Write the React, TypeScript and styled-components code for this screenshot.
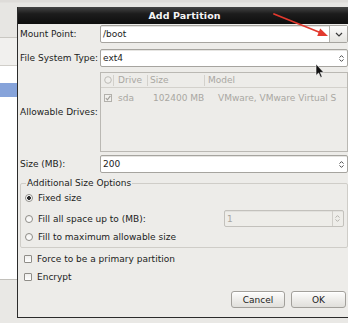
import styled, { createGlobalStyle } from "styled-components"

const GlobalStyle = createGlobalStyle`
  html, body {
    margin: 0;
    padding: 0;
  }
  body {
    width: 348px;
    height: 323px;
    overflow: hidden;
    background: #e9e8e5;
    font-family: "DejaVu Sans", "Liberation Sans", sans-serif;
    font-size: 9px;
    color: #1c1c1c;
  }
`

const Desktop = styled.div`
  position: relative;
  width: 348px;
  height: 323px;
  overflow: hidden;
`

// installer window sitting behind the dialog
const BackWindow = styled.div`
  display: flex;
  flex-direction: column;
  height: 100%;
`

const BackToolbar = styled.div`
  height: 37px;
  background: linear-gradient(#dedcd9 0, #dedcd9 2px, #e7e6e3 3px);
  border-bottom: 1px solid #c9c7c2;
`

const BackBand = styled.div`
  height: 27px;
  background: #f1f0ee;
  border-bottom: 1px solid #d0cec9;
`

const BackList = styled.div`
  height: 214px;
  box-sizing: border-box;
  padding-top: 17px;
  background: #fff;
  border-bottom: 1px solid #c2c0bb;
`

const BackSelected = styled.div`
  height: 14px;
  background: #86a3da;
`

const Dialog = styled.div`
  position: absolute;
  left: 17px;
  top: 7px;
  width: 335px;
  height: 311px;
  box-sizing: border-box;
  border: 1px solid #2b2b2b;
  border-top: none;
  background: #edece9;
  display: flex;
  flex-direction: column;
`

const TitleBar = styled.div`
  height: 17px;
  flex: none;
  display: flex;
  align-items: center;
  justify-content: center;
  background: linear-gradient(#454545, #1c1c1c 40%, #0e0e0e);
  color: #f4f4f4;
  font-weight: bold;
  font-size: 9.5px;
  letter-spacing: 0.1px;
`

const Content = styled.div`
  display: flex;
  flex-direction: column;
  padding: 0 3px 0 2px;
`

const Row = styled.div<{ $mt: number; $h: number }>`
  display: grid;
  grid-template-columns: 80px 1fr;
  align-items: center;
  margin-top: ${(p) => p.$mt}px;
  height: ${(p) => p.$h}px;
`

const Label = styled.span`
  white-space: nowrap;
`

const Field = styled.div<{ $disabled?: boolean }>`
  display: flex;
  align-items: stretch;
  height: 100%;
  box-sizing: border-box;
  border: 1px solid ${(p) => (p.$disabled ? "#c3c1bc" : "#a6a49f")};
  border-radius: 2px;
  background: ${(p) => (p.$disabled ? "#eeede9" : "#fff")};
  box-shadow: inset 0 1px 0 ${(p) => (p.$disabled ? "#e2e1dd" : "#e6e5e2")};
  color: ${(p) => (p.$disabled ? "#a8a6a1" : "#1c1c1c")};
`

const FieldText = styled.span`
  flex: 1;
  display: flex;
  align-items: center;
  padding-left: 2px;
`

const DropButton = styled.div`
  width: 17px;
  display: flex;
  align-items: center;
  justify-content: center;
  border-left: 1px solid #b3b1ac;
  background: linear-gradient(#fbfbfa, #e5e4e0);
`

const Arrows = styled.div<{ $boxed?: boolean }>`
  width: 9px;
  display: flex;
  flex-direction: column;
  align-items: center;
  justify-content: center;
  gap: 1px;
  border-left: ${(p) => (p.$boxed ? "1px solid #cfcdc8" : "none")};
  margin-right: 1px;
`

const DriveTable = styled.div`
  height: 100%;
  box-sizing: border-box;
  border: 1px solid #bab8b3;
  background: #edece9;
  color: #a9a7a2;
  display: flex;
  flex-direction: column;
`

const DriveRow = styled.div<{ $head?: boolean }>`
  display: grid;
  grid-template-columns: 12px 34px 57px 1fr;
  align-items: center;
  height: 14px;
  margin-top: ${(p) => (p.$head ? 0 : 3)}px;
  border-bottom: ${(p) => (p.$head ? "1px solid #d3d1cc" : "none")};
`

const Cell = styled.span<{ $sep?: boolean; $pl: number }>`
  white-space: nowrap;
  overflow: hidden;
  padding-left: ${(p) => p.$pl}px;
  border-left: ${(p) => (p.$sep ? "1px solid #d3d1cc" : "none")};
  line-height: 11px;
  display: flex;
  align-items: center;
`

const Frame = styled.fieldset`
  margin: 4px 0 0 0;
  padding: 2px 2px 3px 4px;
  border: 1px solid #cfcdc8;
  border-radius: 2px;
  display: flex;
  flex-direction: column;
  min-width: 0;
`

const Legend = styled.legend`
  padding: 0 1px;
  margin-left: 1px;
  line-height: 12px;
`

const OptionRow = styled.div<{ $h: number; $mt: number }>`
  display: flex;
  align-items: center;
  gap: 5px;
  height: ${(p) => p.$h}px;
  margin-top: ${(p) => p.$mt}px;
`

const Radio = styled.span<{ $on?: boolean }>`
  width: 8px;
  height: 8px;
  box-sizing: border-box;
  border-radius: 50%;
  border: 1px solid #8f8d88;
  background: ${(p) =>
    p.$on
      ? "radial-gradient(circle, #2e2e2e 0 1.6px, #fff 2.2px)"
      : "linear-gradient(#f2f1ef, #fff)"};
  flex: none;
`

const CheckBox = styled.span`
  width: 8px;
  height: 8px;
  box-sizing: border-box;
  border: 1px solid #8f8d88;
  border-radius: 1px;
  background: linear-gradient(#efeeec, #fff);
  flex: none;
`

const SpinDisabled = styled(Field)`
  margin-left: auto;
  margin-right: 1px;
  width: 120px;
  height: 17px;
`

const CheckRow = styled.div<{ $mt: number }>`
  display: flex;
  align-items: center;
  gap: 5px;
  height: 12px;
  padding-left: 4px;
  margin-top: ${(p) => p.$mt}px;
`

const ButtonBar = styled.div`
  display: flex;
  justify-content: flex-end;
  gap: 6px;
  margin-top: 8px;
  margin-right: 2px;
`

const Button = styled.button<{ $w: number }>`
  width: ${(p) => p.$w}px;
  height: 17px;
  padding: 0;
  font: inherit;
  color: #1c1c1c;
  border: 1px solid #a2a09b;
  border-radius: 3px;
  background: linear-gradient(#fdfdfc, #ebeae7 60%, #e0dfdb);
  box-shadow: inset 0 1px 0 #fff;
`

const Overlay = styled.svg`
  position: absolute;
  left: 0;
  top: 0;
  pointer-events: none;
`

const ChevronDown = () => (
  <svg width="8" height="5" viewBox="0 0 8 5">
    <path d="M1 1l3 3 3-3" fill="none" stroke="#3a3a3a" strokeWidth="1.2" />
  </svg>
)

const UpDown = ({ color = "#4a4a4a" }: { color?: string }) => (
  <>
    <svg width="5" height="3" viewBox="0 0 5 3">
      <path d="M0.5 2.6L2.5 0.6l2 2" fill="none" stroke={color} strokeWidth="1" />
    </svg>
    <svg width="5" height="3" viewBox="0 0 5 3">
      <path d="M0.5 0.4l2 2 2-2" fill="none" stroke={color} strokeWidth="1" />
    </svg>
  </>
)

const TickBox = () => (
  <svg width="8" height="8" viewBox="0 0 8 8">
    <rect x="0.5" y="0.5" width="7" height="7" fill="#f0efec" stroke="#b2b0ab" />
    <path d="M1.8 4l1.6 1.8 3-4" fill="none" stroke="#a09e99" strokeWidth="1.1" />
  </svg>
)

const HeadToggle = () => (
  <svg width="8" height="8" viewBox="0 0 8 8">
    <circle cx="4" cy="4" r="3.3" fill="#f0efec" stroke="#bcbab5" />
  </svg>
)

export default function App() {
  return (
    <>
      <GlobalStyle />
      <Desktop>
        <BackWindow>
          <BackToolbar />
          <BackBand />
          <BackList>
            <BackSelected />
          </BackList>
        </BackWindow>

        <Dialog>
          <TitleBar>Add Partition</TitleBar>
          <Content>
            <Row $mt={1} $h={18}>
              <Label>Mount Point:</Label>
              <Field>
                <FieldText>/boot</FieldText>
                <DropButton>
                  <ChevronDown />
                </DropButton>
              </Field>
            </Row>

            <Row $mt={6} $h={18}>
              <Label>File System Type:</Label>
              <Field>
                <FieldText>ext4</FieldText>
                <Arrows>
                  <UpDown />
                </Arrows>
              </Field>
            </Row>

            <Row $mt={5} $h={80}>
              <Label>Allowable Drives:</Label>
              <DriveTable>
                <DriveRow $head>
                  <Cell $pl={3}>
                    <HeadToggle />
                  </Cell>
                  <Cell $pl={4} $sep>
                    Drive
                  </Cell>
                  <Cell $pl={2} $sep>
                    Size
                  </Cell>
                  <Cell $pl={3} $sep>
                    Model
                  </Cell>
                </DriveRow>
                <DriveRow>
                  <Cell $pl={3}>
                    <TickBox />
                  </Cell>
                  <Cell $pl={5}>sda</Cell>
                  <Cell $pl={6}>102400 MB</Cell>
                  <Cell $pl={14}>VMware, VMware Virtual S</Cell>
                </DriveRow>
              </DriveTable>
            </Row>

            <Row $mt={3} $h={18}>
              <Label>Size (MB):</Label>
              <Field>
                <FieldText>200</FieldText>
                <Arrows>
                  <UpDown />
                </Arrows>
              </Field>
            </Row>

            <Frame>
              <Legend>Additional Size Options</Legend>
              <OptionRow $h={14} $mt={0}>
                <Radio $on />
                <span>Fixed size</span>
              </OptionRow>
              <OptionRow $h={17} $mt={5}>
                <Radio />
                <span>Fill all space up to (MB):</span>
                <SpinDisabled $disabled>
                  <FieldText>1</FieldText>
                  <Arrows $boxed>
                    <UpDown color="#b3b1ac" />
                  </Arrows>
                </SpinDisabled>
              </OptionRow>
              <OptionRow $h={14} $mt={3}>
                <Radio />
                <span>Fill to maximum allowable size</span>
              </OptionRow>
            </Frame>

            <CheckRow $mt={5}>
              <CheckBox />
              <span>Force to be a primary partition</span>
            </CheckRow>
            <CheckRow $mt={6}>
              <CheckBox />
              <span>Encrypt</span>
            </CheckRow>

            <ButtonBar>
              <Button $w={54}>Cancel</Button>
              <Button $w={55}>OK</Button>
            </ButtonBar>
          </Content>
        </Dialog>

        <Overlay width="348" height="323" viewBox="0 0 348 323">
          <line x1="274" y1="14" x2="320" y2="32.5" stroke="#e2392e" strokeWidth="1.8" strokeLinecap="round" />
          <polygon points="328,36 317.2,35.9 320.2,28.5" fill="#e2392e" />
          <path
            d="M316 64 L316 75.5 L318.6 73 L320.6 77.4 L322.2 76.7 L320.3 72.4 L323.8 72.4 Z"
            fill="#111"
            stroke="#fff"
            strokeWidth="0.6"
          />
        </Overlay>
      </Desktop>
    </>
  )
}
